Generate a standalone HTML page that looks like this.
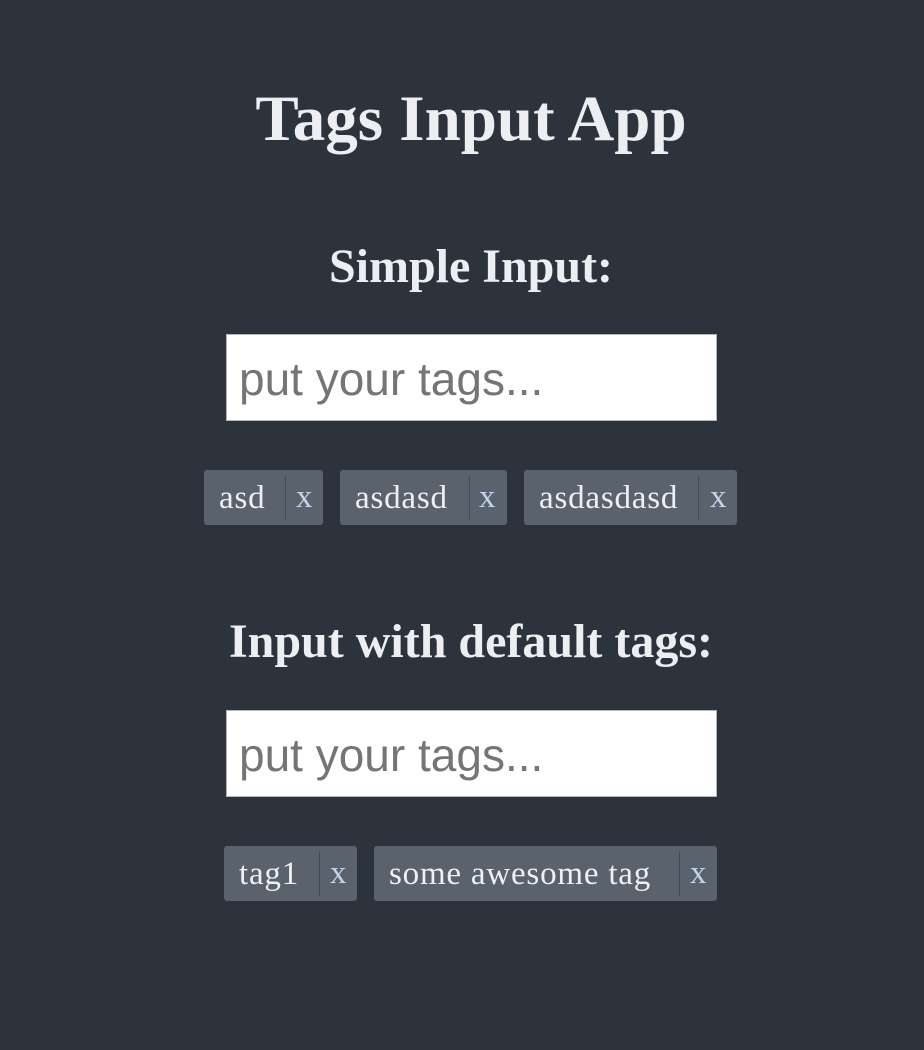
<!DOCTYPE html>
<html><head><meta charset="utf-8"><style>
html,body{margin:0;padding:0;background:#2d333c;width:924px;height:1050px;overflow:hidden}
.t{position:absolute;left:9px;width:924px;text-align:center;font-family:"Liberation Serif",serif;font-weight:bold;color:#eceef1;margin:0;line-height:1;white-space:nowrap}
.in{position:absolute;left:226px;width:489px;height:85px;background:#fff;border:1px solid #b5b5b5;font-family:"Liberation Sans",sans-serif;font-size:46px;color:#757575;box-sizing:content-box}
.in span{position:absolute;left:12px;top:21px;line-height:1}
.tag{position:absolute;top:470px;height:55px;background:#5a626d;border-radius:3px;font-family:"Liberation Serif",serif;font-size:33px;color:#eef0f3}
.tag .l{position:absolute;left:15px;top:12px;line-height:1;letter-spacing:0.8px}
.tag .d{position:absolute;top:6px;width:1px;height:44px;background:#454b55}
.tag .x{position:absolute;top:11px;color:#c3d5ee;line-height:1}
</style></head><body>
<h1 class="t" style="top:87px;font-size:65px">Tags Input App</h1>
<h2 class="t" style="top:243px;font-size:48px">Simple Input:</h2>
<div class="in" style="top:334px"><span>put your tags...</span></div>
<div class="tag" style="left:204px;width:119px"><span class="l">asd</span><span class="d" style="left:81px"></span><span class="x" style="left:92px">x</span></div>
<div class="tag" style="left:340px;width:167px"><span class="l">asdasd</span><span class="d" style="left:129px"></span><span class="x" style="left:139px">x</span></div>
<div class="tag" style="left:524px;width:213px"><span class="l">asdasdasd</span><span class="d" style="left:174px"></span><span class="x" style="left:186px">x</span></div>
<h2 class="t" style="top:618px;font-size:48px">Input with default tags:</h2>
<div class="in" style="top:710px"><span>put your tags...</span></div>
<div class="tag" style="left:224px;top:846px;width:133px"><span class="l">tag1</span><span class="d" style="left:95px"></span><span class="x" style="left:106px">x</span></div>
<div class="tag" style="left:374px;top:846px;width:343px"><span class="l">some awesome tag</span><span class="d" style="left:305px"></span><span class="x" style="left:316px">x</span></div>
</body></html>
